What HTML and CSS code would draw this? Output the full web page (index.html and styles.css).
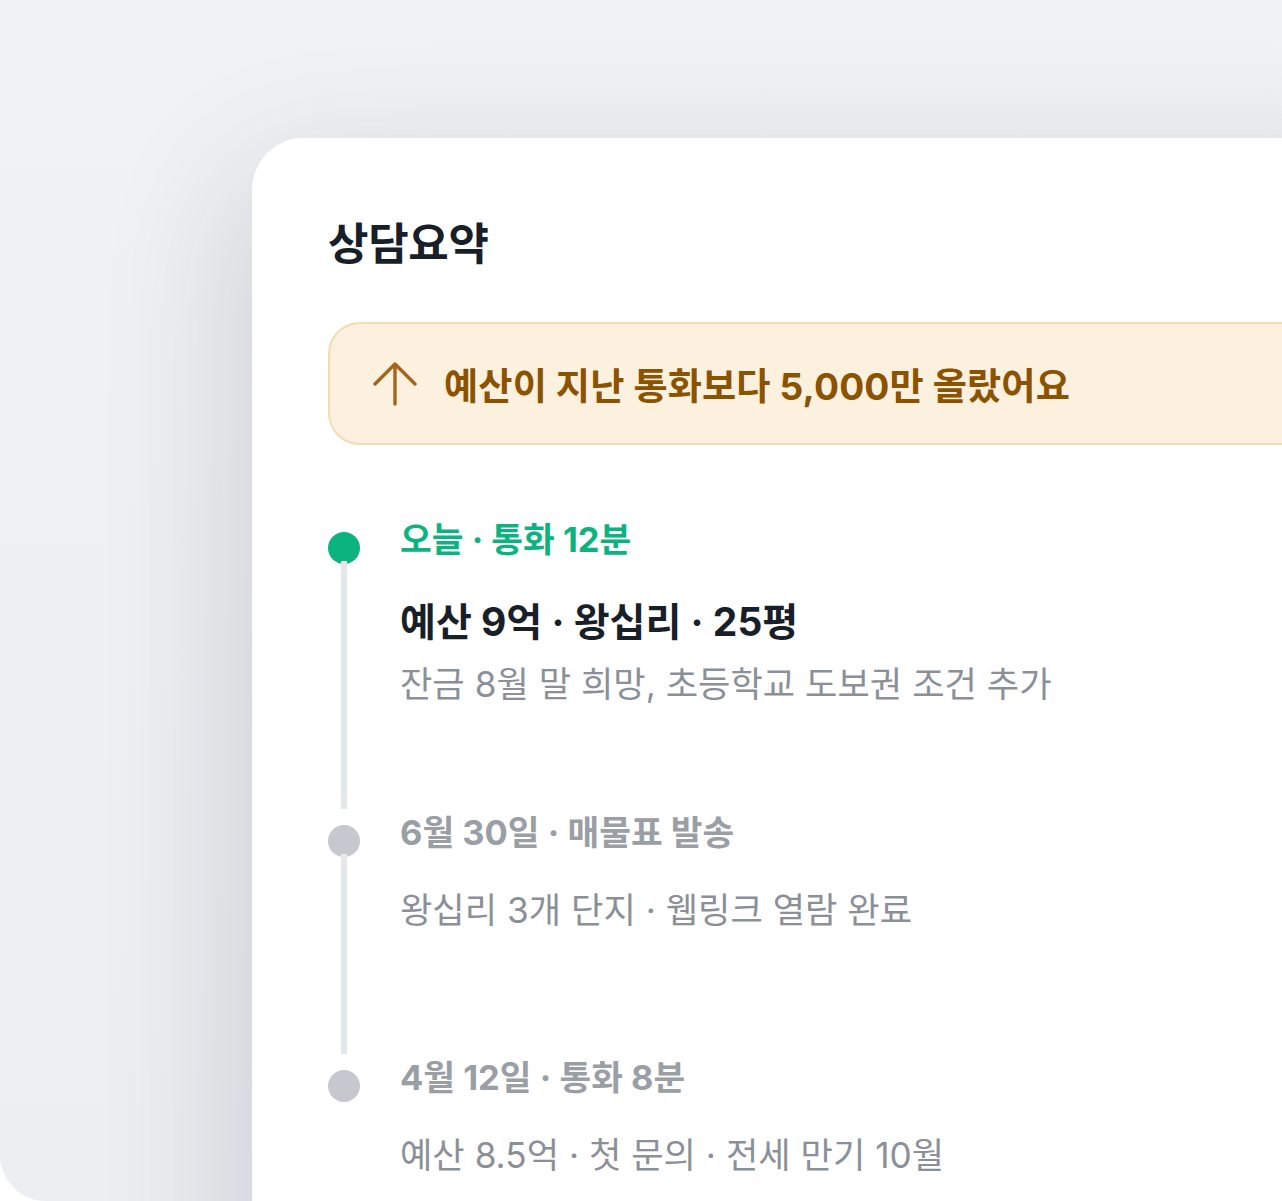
FILE: index.html
```html
<!DOCTYPE html>
<html lang="ko">
<head>
<meta charset="utf-8">
<link rel="stylesheet" href="styles.css">
</head>
<body>
<div class="stage">
  <section class="card">
    <h1 class="card-title">상담요약</h1>
    <div class="alert">
      <svg class="alert-icon" viewBox="0 0 44 44" width="44" height="44" aria-hidden="true">
        <path d="M22 2 V42 M2 22 L22 2 L42 22" fill="none" stroke="#a4661c" stroke-width="3.4" stroke-linecap="round" stroke-linejoin="round"/>
      </svg>
      <span class="alert-text">예산이 지난 통화보다 5,000만 올랐어요</span>
    </div>
    <ol class="timeline">
      <li class="item item-current">
        <div class="rail"><span class="dot dot-active"></span><span class="line"></span></div>
        <div class="content">
          <p class="meta meta-active">오늘 · 통화 12분</p>
          <p class="headline">예산 9억 · 왕십리 · 25평</p>
          <p class="desc">잔금 8월 말 희망, 초등학교 도보권 조건 추가</p>
        </div>
      </li>
      <li class="item">
        <div class="rail"><span class="dot"></span><span class="line"></span></div>
        <div class="content">
          <p class="meta">6월 30일 · 매물표 발송</p>
          <p class="desc desc-gap">왕십리 3개 단지 · 웹링크 열람 완료</p>
        </div>
      </li>
      <li class="item item-last">
        <div class="rail"><span class="dot"></span></div>
        <div class="content">
          <p class="meta">4월 12일 · 통화 8분</p>
          <p class="desc desc-gap">예산 8.5억 · 첫 문의 · 전세 만기 10월</p>
        </div>
      </li>
    </ol>
  </section>
</div>
</body>
</html>
```
FILE: styles.css
```css
* { box-sizing: border-box; }
html, body { margin: 0; padding: 0; background: #ffffff; }
body {
  font-family: "Inter", "Noto Sans CJK KR", sans-serif;
  width: 1282px;
  height: 1201px;
  overflow: hidden;
}
.stage {
  width: 1282px;
  height: 1201px;
  overflow: hidden;
  border-bottom-left-radius: 46px;
  background: linear-gradient(180deg, #f1f2f5 0%, #eceef1 100%);
  padding-top: 138px;
  padding-left: 252px;
}
.card {
  width: 1200px;
  height: 1200px;
  background: #ffffff;
  border-top-left-radius: 52px;
  box-shadow: -12px 40px 140px rgba(20, 30, 50, 0.16);
  padding: 76px 0 0 76px;
}
.card-title {
  margin: 0;
  font-size: 44px;
  line-height: 60px;
  font-weight: 700;
  color: #191f28;
  letter-spacing: -0.3px;
}
.alert {
  margin-top: 48px;
  height: 123px;
  border: 2px solid #f3dcb3;
  background: #fcf0df;
  border-radius: 32px;
  display: flex;
  align-items: center;
  padding-left: 43px;
  gap: 27px;
}
.alert-icon { flex: none; }
.alert-text {
  font-size: 37.2px;
  font-weight: 700;
  color: #8b5300;
  letter-spacing: 0.1px;
}
.timeline {
  list-style: none;
  margin: 75px 0 0 0;
  padding: 0;
}
.item {
  display: flex;
  gap: 40px;
}
.rail {
  width: 32px;
  flex: none;
  display: flex;
  flex-direction: column;
  align-items: center;
  padding-top: 12px;
}
.dot {
  width: 32px;
  height: 32px;
  border-radius: 50%;
  background: #c5c8ce;
  flex: none;
}
.dot-active { background: #0bb47f; }
.line {
  width: 6px;
  flex: 1;
  background: #e5e8eb;
  margin: -3px 0 4px;
}
.content { padding-bottom: 125px; }
.item-current .content { padding-bottom: 106px; }
.meta {
  margin: 0;
  font-size: 34.5px;
  line-height: 40px;
  font-weight: 700;
  color: #9a9ea5;
}
.meta-active { color: #0bb47f; }
.headline {
  margin: 38px 0 0;
  font-size: 39px;
  line-height: 48px;
  font-weight: 700;
  color: #191f28;
}
.desc {
  margin: 15px 0 0;
  font-size: 35.2px;
  line-height: 46px;
  font-weight: 400;
  color: #8b9098;
}
.desc-gap { margin-top: 34px; }
```
